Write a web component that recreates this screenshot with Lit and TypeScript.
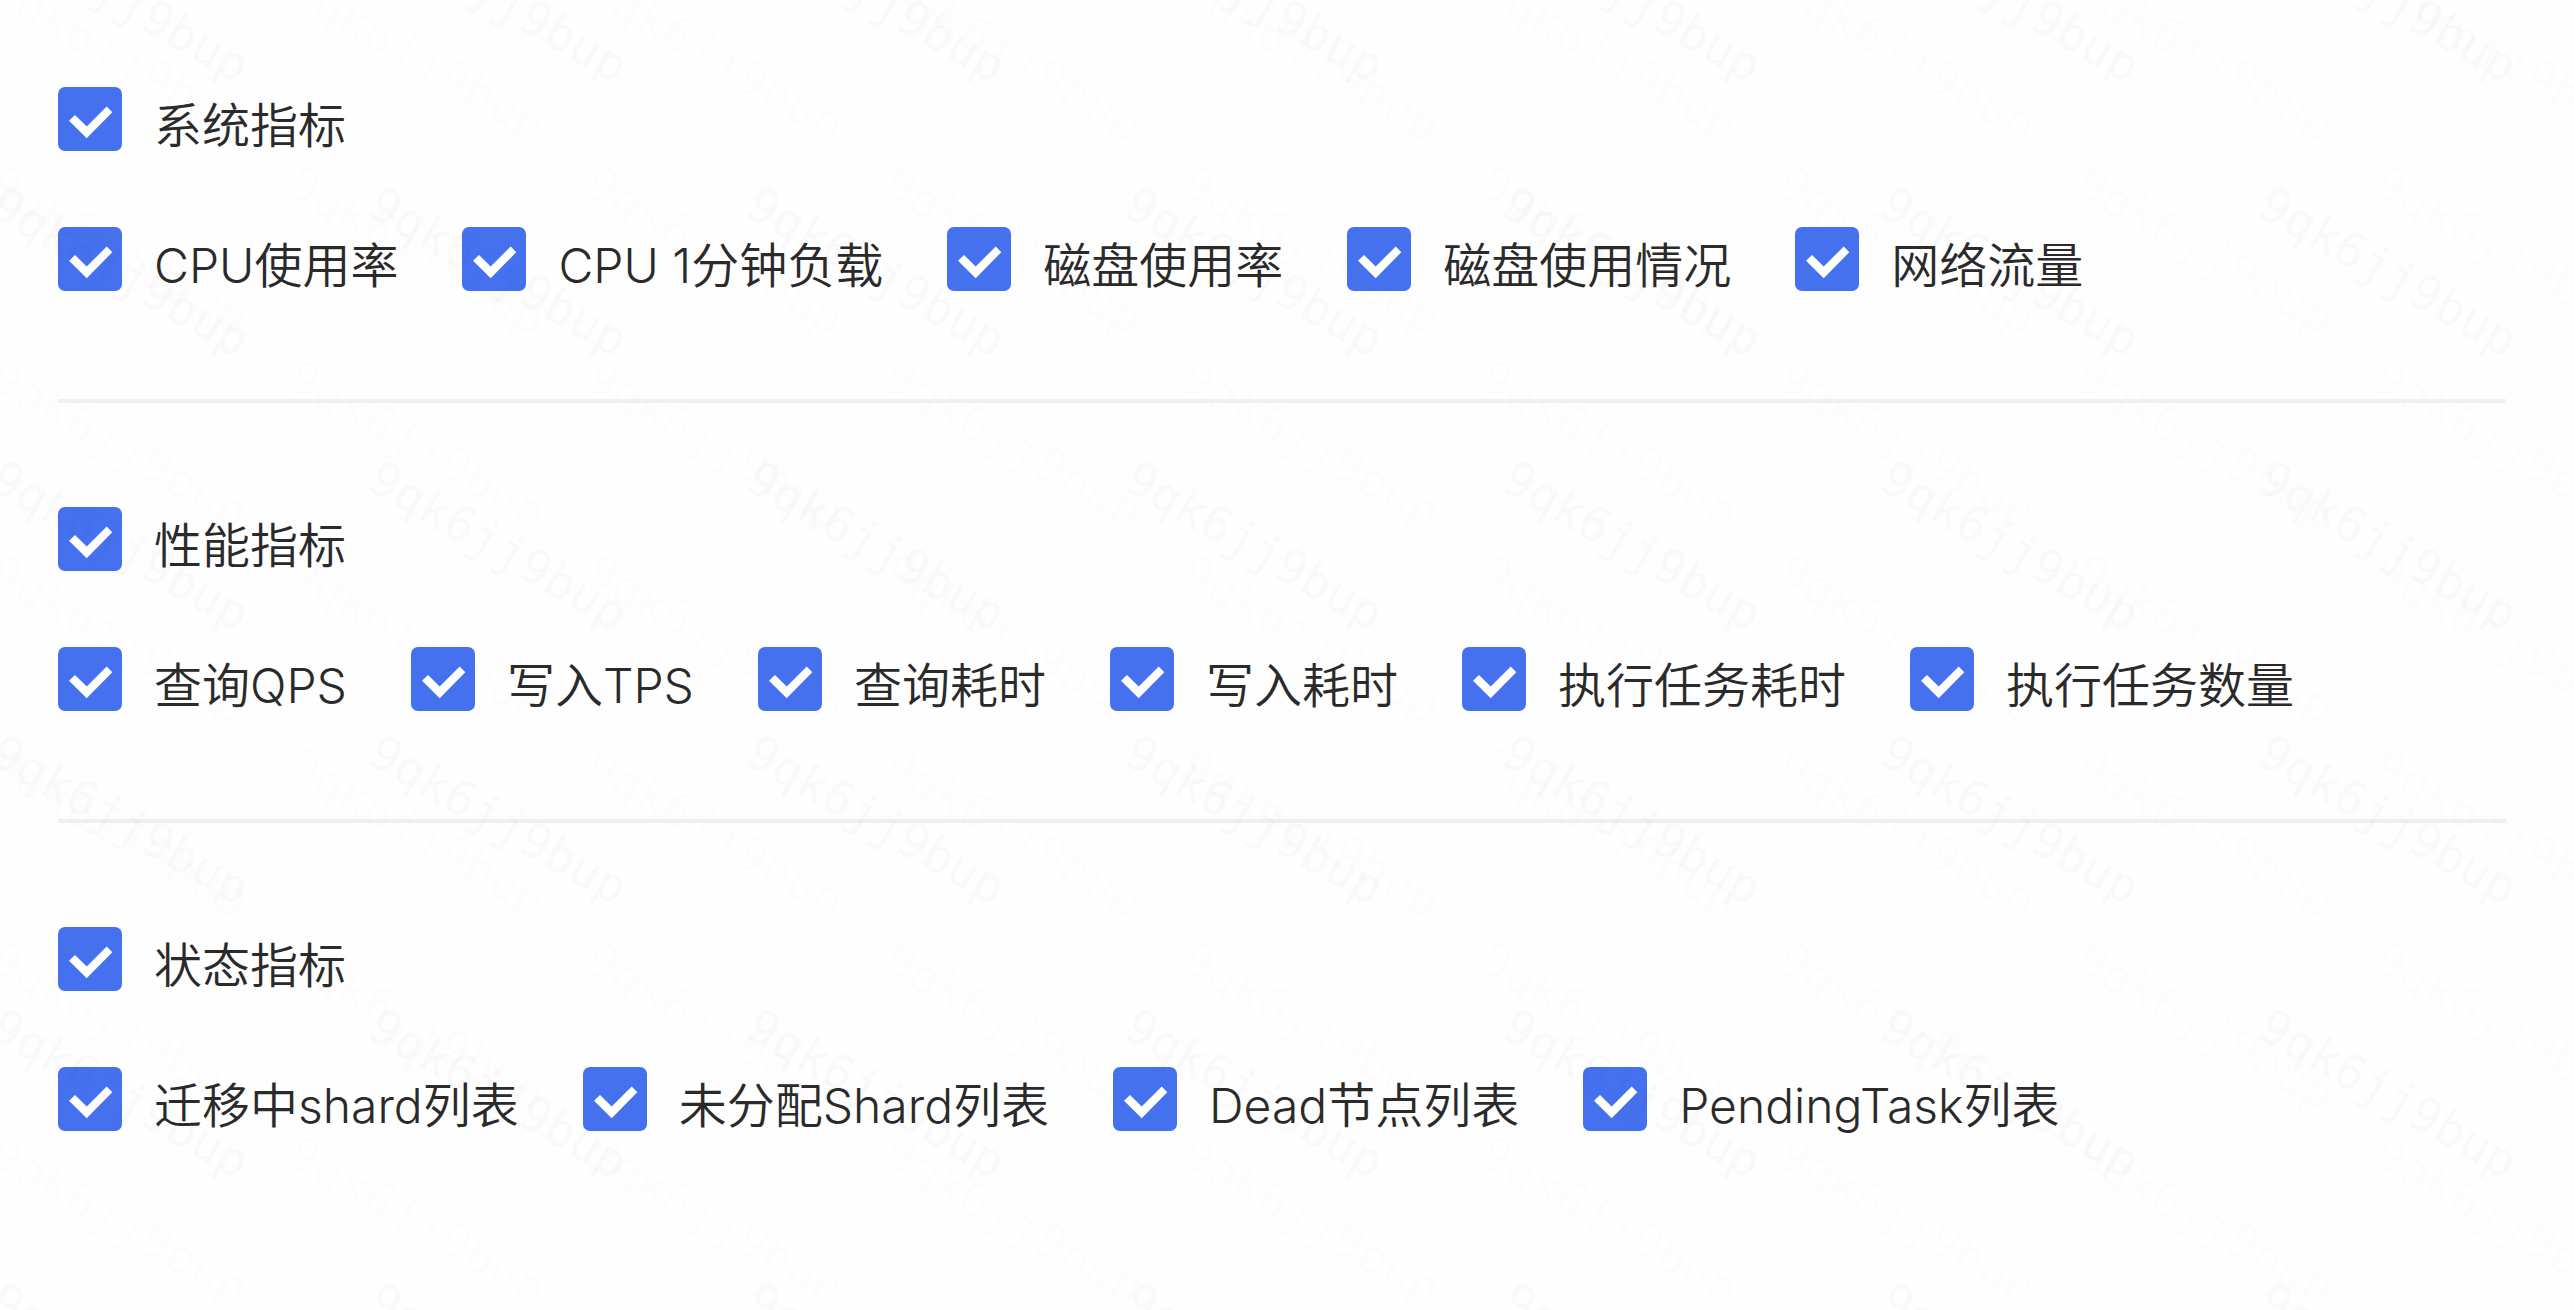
import { LitElement, html, css, svg } from "lit";
import { customElement, property } from "lit/decorators.js";

interface MetricGroup {
  title: string;
  items: string[];
}

const GROUPS: MetricGroup[] = [
  { title: "系统指标", items: ["CPU使用率", "CPU 1分钟负载", "磁盘使用率", "磁盘使用情况", "网络流量"] },
  { title: "性能指标", items: ["查询QPS", "写入TPS", "查询耗时", "写入耗时", "执行任务耗时", "执行任务数量"] },
  { title: "状态指标", items: ["迁移中shard列表", "未分配Shard列表", "Dead节点列表", "PendingTask列表"] },
];

@customElement("metric-check")
class MetricCheck extends LitElement {
  @property() label = "";

  static styles = css`
    :host {
      display: block;
    }
    .check {
      display: flex;
      align-items: flex-start;
      gap: 32px;
      cursor: pointer;
    }
    .control {
      display: grid;
      width: 64px;
      height: 64px;
      flex: none;
    }
    .input,
    .tick {
      grid-area: 1 / 1;
      width: 64px;
      height: 64px;
      margin: 0;
    }
    .input {
      appearance: none;
      box-sizing: border-box;
      border: 2px solid #d9d9d9;
      border-radius: 7px;
      background: #fff;
      cursor: pointer;
    }
    .input:checked {
      border-color: #4571ef;
      background: #4571ef;
    }
    .tick {
      fill: #fff;
      pointer-events: none;
      visibility: hidden;
    }
    .input:checked + .tick {
      visibility: visible;
    }
    .text {
      padding-top: 8px;
      font-size: 48px;
      font-weight: 350;
      line-height: 62px;
      white-space: nowrap;
    }
  `;

  render() {
    return html`
      <label class="check">
        <span class="control">
          <input class="input" type="checkbox" checked />
          <svg class="tick" viewBox="0 0 64 64" aria-hidden="true">
            <path d="M11 33.7 17 28 28.7 39.6 48.7 19.4 54.3 25.2 28.7 51.2Z" />
          </svg>
        </span>
        <span class="text">${this.label}</span>
      </label>
    `;
  }
}

@customElement("app-root")
class AppRoot extends LitElement {
  static styles = css`
    :host {
      display: block;
      position: relative;
      min-height: 100vh;
      box-sizing: border-box;
      overflow: hidden;
      background: #fefefe;
      color: #2a2a2a;
      font-family: Inter, "Noto Sans CJK SC", sans-serif;
    }
    .page {
      padding: 87px 68px 0 58px;
    }
    .group {
      height: 312px;
      box-sizing: border-box;
    }
    .group + .group {
      height: 420px;
      padding-top: 104px;
      border-top: 4px solid #f0f0f0;
    }
    .items {
      display: flex;
      flex-wrap: wrap;
      gap: 32px 64px;
    }
    .head {
      display: flex;
      margin-bottom: 70px;
    }
    .watermark {
      position: absolute;
      inset: 0;
      width: 100%;
      height: 100%;
      pointer-events: none;
    }
    .mark {
      font-family: "DejaVu Sans Mono", monospace;
      font-size: 48px;
    }
    .strong {
      fill: rgba(0, 0, 0, 0.02);
    }
    .faint {
      fill: rgba(200, 80, 40, 0.016);
    }
  `;

  private watermark() {
    return svg`
      <svg class="watermark" aria-hidden="true">
        <defs>
          <pattern id="faint" x="-20" y="146" width="298" height="194" patternUnits="userSpaceOnUse">
            <text class="mark faint" transform="translate(6 47) rotate(30)">9qk6jj9bup</text>
          </pattern>
          <pattern id="strong" x="-20" y="156" width="378" height="274" patternUnits="userSpaceOnUse">
            <text class="mark strong" transform="translate(7 58) rotate(30)">9qk6jj9bup</text>
          </pattern>
        </defs>
        <rect width="100%" height="100%" fill="url(#faint)" />
        <rect width="100%" height="100%" fill="url(#strong)" />
      </svg>
    `;
  }

  render() {
    return html`
      <main class="page">
        ${GROUPS.map(
          (group) => html`
            <section class="group">
              <div class="head"><metric-check .label=${group.title}></metric-check></div>
              <div class="items">
                ${group.items.map((item) => html`<metric-check .label=${item}></metric-check>`)}
              </div>
            </section>
          `,
        )}
      </main>
      ${this.watermark()}
    `;
  }
}
